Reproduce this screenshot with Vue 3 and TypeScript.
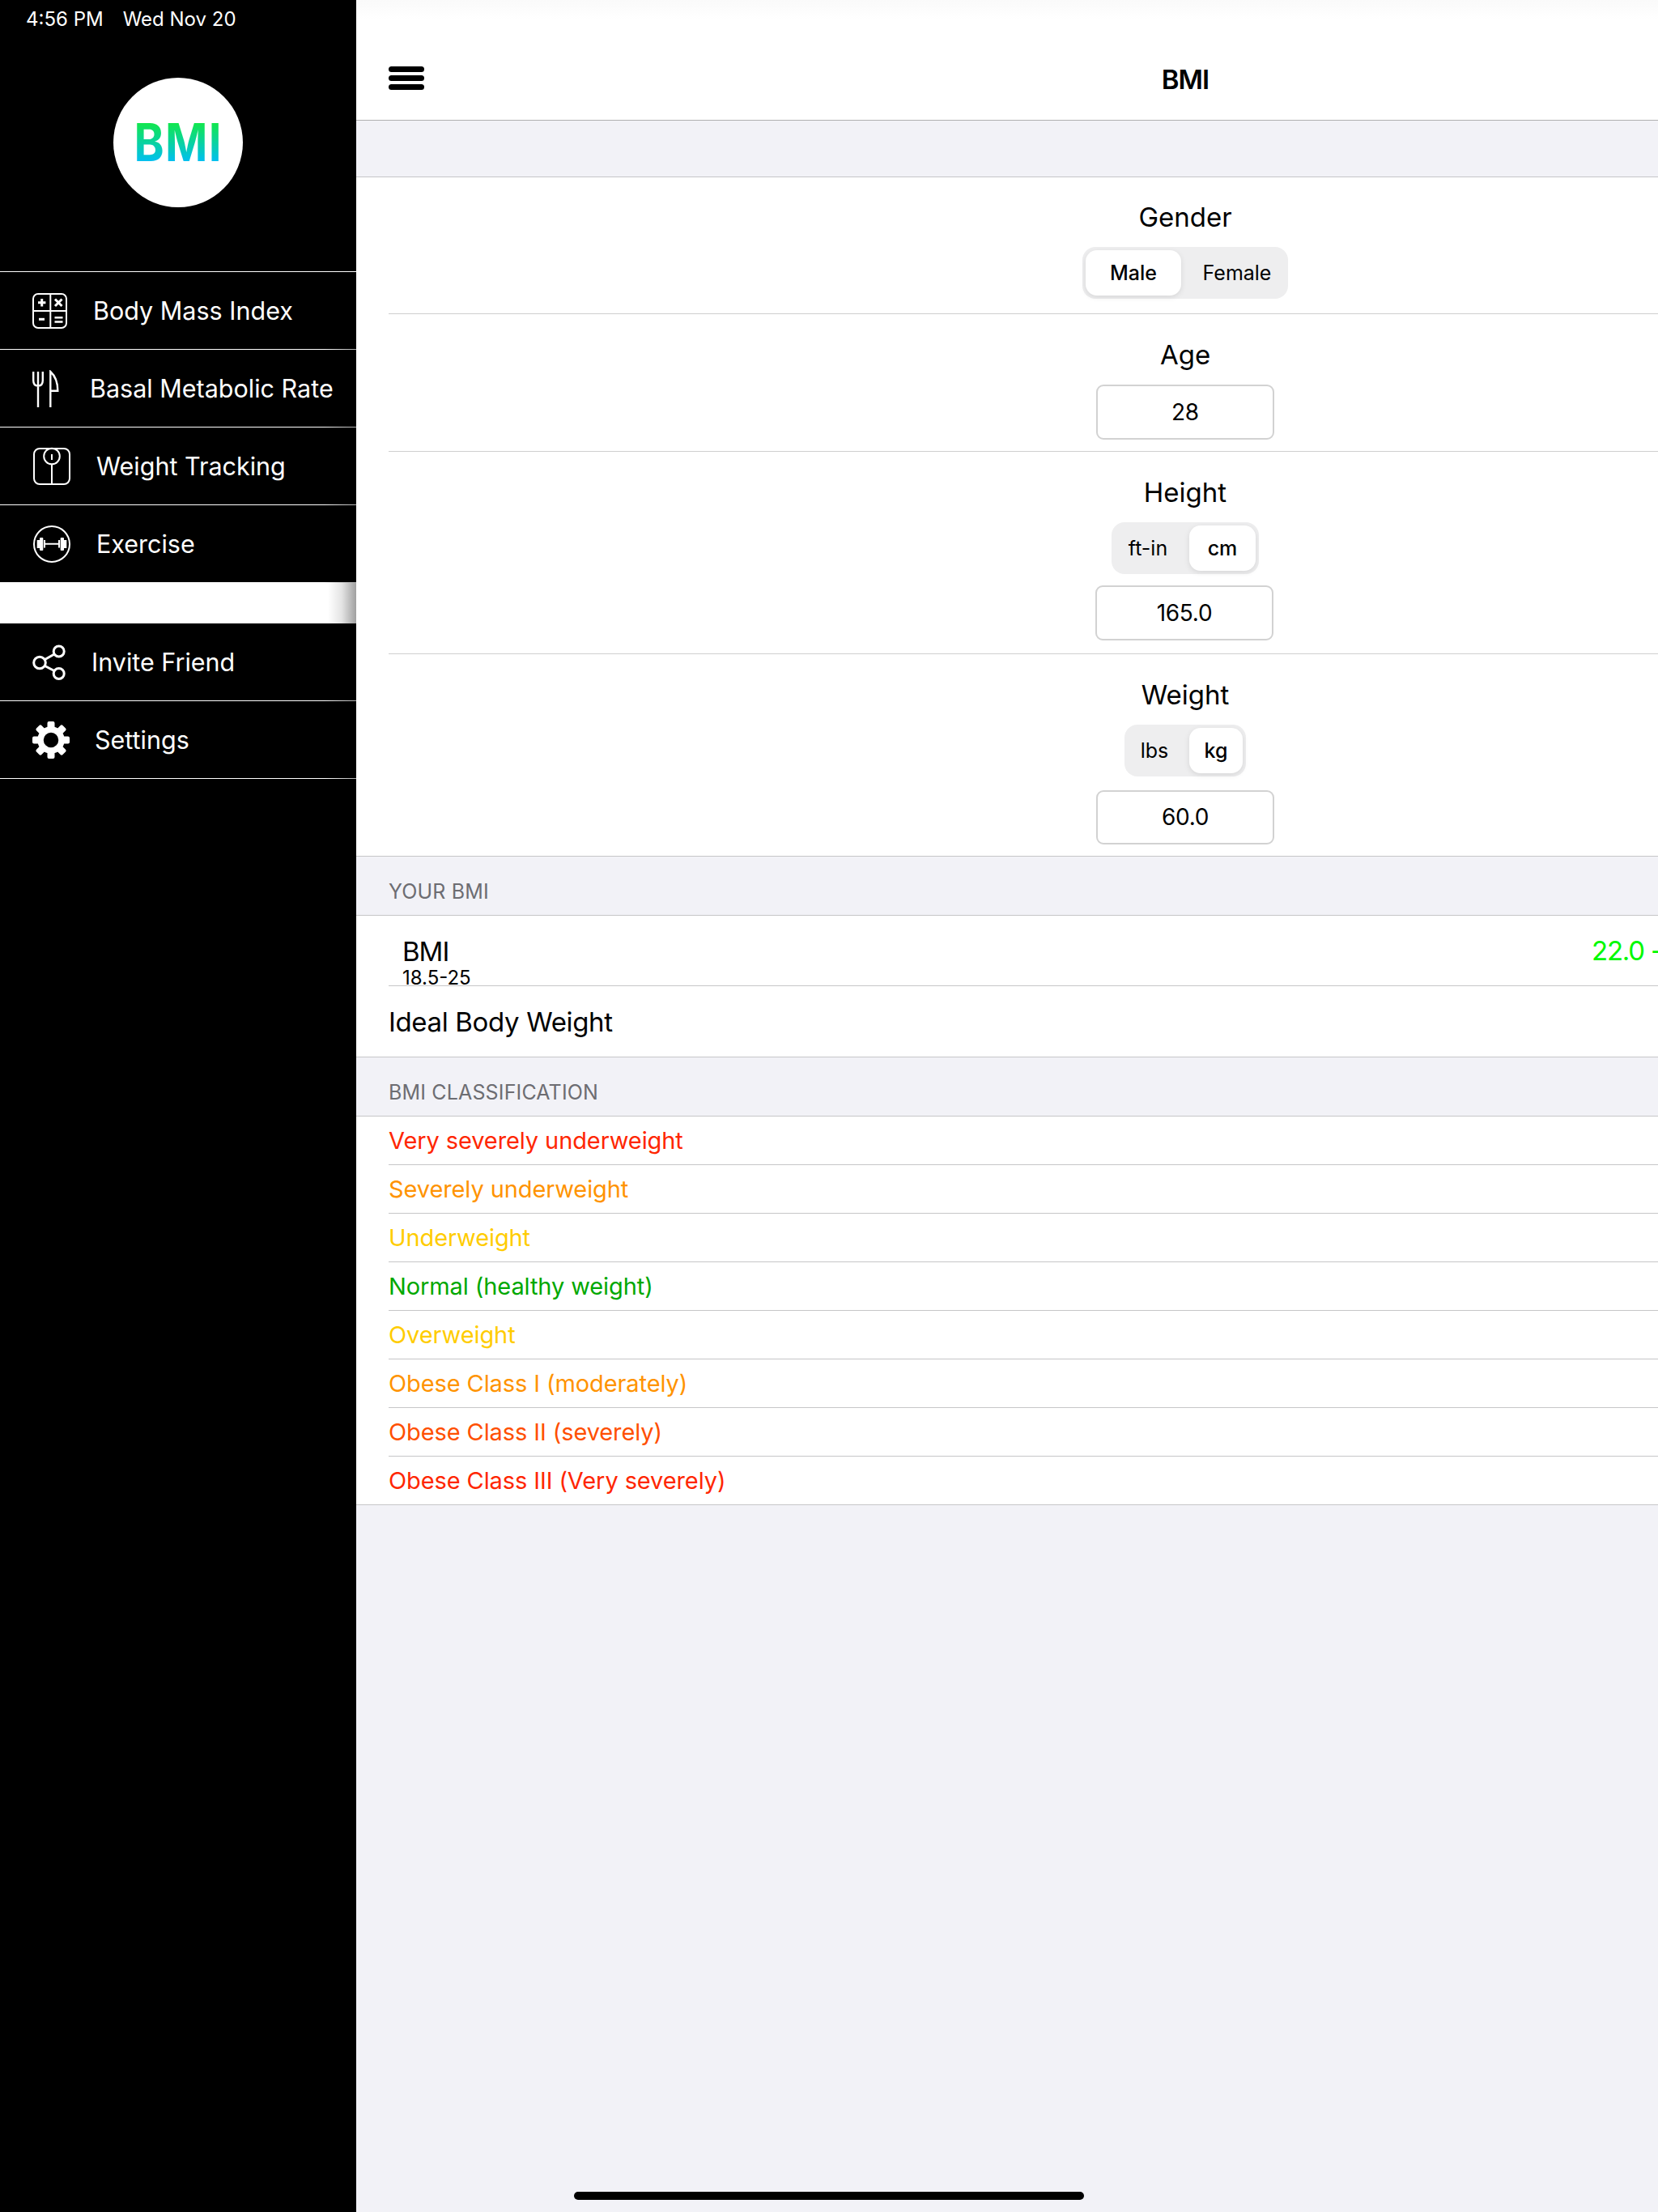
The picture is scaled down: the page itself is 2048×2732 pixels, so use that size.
<script setup lang="ts">
const menuTop = [
  { label: 'Body Mass Index', icon: 'calc', cls: 'l-bmi' },
  { label: 'Basal Metabolic Rate', icon: 'fork', cls: 'l-bmr' },
  { label: 'Weight Tracking', icon: 'scale', cls: 'l-wt' },
  { label: 'Exercise', icon: 'dumbbell', cls: 'l-ex' },
]
const menuBottom = [
  { label: 'Invite Friend', icon: 'share', cls: 'l-inv' },
  { label: 'Settings', icon: 'gear', cls: 'l-set' },
]
const classes = [
  { t: 'Very severely underweight', c: '#ff2600' },
  { t: 'Severely underweight', c: '#ff9300' },
  { t: 'Underweight', c: '#ffcc00' },
  { t: 'Normal (healthy weight)', c: '#00a800' },
  { t: 'Overweight', c: '#ffcc00' },
  { t: 'Obese Class I (moderately)', c: '#ff9300' },
  { t: 'Obese Class II (severely)', c: '#ff4f00' },
  { t: 'Obese Class III (Very severely)', c: '#ff2600' },
]
const gearTeeth = [0, 45, 90, 135, 180, 225, 270, 315]
</script>

<template>
  <div class="screen">
    <aside class="side">
      <div class="status">
        <span>4:56 PM</span><span>Wed Nov 20</span>
      </div>
      <div class="logo-wrap">
        <div class="logo"><span class="logo-text">BMI</span></div>
      </div>
      <nav class="menu">
        <div v-for="m in menuTop" :key="m.label" class="item">
          <div class="ico">
            <svg v-if="m.icon === 'calc'" width="46" height="46" viewBox="0 0 46 46" fill="none" stroke="#fff" stroke-width="2">
              <rect x="1" y="2" width="41" height="42" rx="6" />
              <path d="M22.300 2V44M1 23H42" />
              <path d="M7 12.700H16.400M11.700 8V17.400" stroke-width="3" />
              <path d="M28 8.500L36.500 17M36.500 8.500L28 17" stroke-width="3" />
              <path d="M8 33.300H15" stroke-width="3" />
              <path d="M27.500 31.300H37.500M27.500 36.500H37.500" stroke-width="2.500" />
            </svg>
            <svg v-else-if="m.icon === 'fork'" width="46" height="46" viewBox="0 0 46 46" fill="none" stroke="#fff" stroke-width="2.400">
              <path d="M1.200 2V13Q1.200 19.500 7 19.500Q12.800 19.500 12.800 13V2M7 2V46" />
              <path d="M22.300 46V2Q31.300 10 31.300 25.700H22.300" />
            </svg>
            <svg v-else-if="m.icon === 'scale'" width="48" height="48" viewBox="0 0 48 48" fill="none" stroke="#fff" stroke-width="2">
              <rect x="2" y="2" width="44" height="44" rx="7" />
              <circle cx="24" cy="11.500" r="9.800" />
              <path d="M24 21.300V46" />
              <path d="M24 9V16" stroke-width="2" />
            </svg>
            <svg v-else-if="m.icon === 'dumbbell'" width="48" height="48" viewBox="0 0 48 48" fill="none" stroke="#fff" stroke-width="2">
              <circle cx="24" cy="24" r="22" />
              <path d="M15 23.800H33M15 19V28.500M33 19V28.500" />
              <rect x="5.700" y="19" width="3.300" height="10" fill="#fff" stroke="none" />
              <rect x="9" y="16" width="4.300" height="16" rx="1" fill="#fff" stroke="none" />
              <rect x="34.700" y="16" width="4.300" height="16" rx="1" fill="#fff" stroke="none" />
              <rect x="39" y="19" width="3.300" height="10" fill="#fff" stroke="none" />
            </svg>
          </div>
          <span class="label" :class="m.cls">{{ m.label }}</span>
        </div>
      </nav>
      <div class="gap"></div>
      <nav class="menu2">
        <div v-for="m in menuBottom" :key="m.label" class="item">
          <div class="ico">
            <svg v-if="m.icon === 'share'" width="46" height="46" viewBox="0 0 46 46" fill="none" stroke="#fff" stroke-width="3">
              <circle cx="9" cy="23.500" r="7.300" />
              <circle cx="32.700" cy="9.500" r="6.500" />
              <circle cx="32.700" cy="37" r="6.500" />
              <path d="M15.500 19.500L27 13M15.500 27.500L27 33.500" />
            </svg>
            <svg v-else width="46" height="46" viewBox="0 0 46 46">
              <g fill="#fff">
                <rect v-for="a in gearTeeth" :key="a" x="18.500" y="0" width="9" height="10" rx="2" :transform="`rotate(${a} 23 23)`" />
              </g>
              <circle cx="23" cy="23" r="13" fill="none" stroke="#fff" stroke-width="7.500" />
            </svg>
          </div>
          <span class="label" :class="m.cls">{{ m.label }}</span>
        </div>
      </nav>
    </aside>

    <main class="main">
      <header class="nav">
        <div class="burger"><i></i><i></i><i></i></div>
        <h1 class="title">BMI</h1>
      </header>
      <div class="top-gap"></div>

      <section class="form">
        <div class="field f-gender">
          <div class="flabel">Gender</div>
          <div class="seg">
            <span class="opt on o-male">Male</span>
            <span class="opt o-female">Female</span>
          </div>
        </div>
        <div class="field f-age">
          <div class="flabel">Age</div>
          <div class="input">28</div>
        </div>
        <div class="field f-height">
          <div class="flabel">Height</div>
          <div class="seg">
            <span class="opt o-ftin">ft-in</span>
            <span class="opt on o-cm">cm</span>
          </div>
          <div class="input i-height">165.0</div>
        </div>
        <div class="field f-weight">
          <div class="flabel">Weight</div>
          <div class="seg">
            <span class="opt o-lbs">lbs</span>
            <span class="opt on o-kg">kg</span>
          </div>
          <div class="input i-weight">60.0</div>
        </div>
      </section>

      <div class="sect-head">YOUR BMI</div>
      <section class="card">
        <div class="bmi-row">
          <div class="bmi-left">
            <div class="bmi-name">BMI</div>
            <div class="bmi-range">18.5-25</div>
          </div>
          <div class="bmi-val">22.0 - Normal</div>
        </div>
        <div class="ideal">Ideal Body Weight</div>
      </section>

      <div class="sect-head">BMI CLASSIFICATION</div>
      <section class="card">
        <div v-for="c in classes" :key="c.t" class="cls" :style="{ color: c.c }">{{ c.t }}</div>
      </section>
    </main>
    <div class="home"></div>
  </div>
</template>

<style>
html, body { margin: 0; background: #f2f2f7; }
</style>

<style scoped>
.screen {
  width: 2048px;
  height: 2732px;
  display: flex;
  overflow: hidden;
  position: relative;
  background: #f2f2f7;
  font-family: Inter, "Liberation Sans", sans-serif;
  color: #000;
}
.side {
  width: 440px;
  flex: none;
  background: #000;
  color: #fff;
  display: flex;
  flex-direction: column;
}
.status {
  height: 48px;
  box-sizing: border-box;
  padding: 11px 0 0 32px;
  font-size: 24px;
  line-height: 26px;
  display: flex;
  gap: 24px;
}
.logo-wrap {
  height: 287px;
  box-sizing: border-box;
  padding-top: 48px;
  display: flex;
  justify-content: center;
}
.logo {
  width: 160px;
  height: 160px;
  border-radius: 50%;
  background: #fff;
  display: flex;
  align-items: center;
  justify-content: center;
}
.logo-text {
  font-size: 64px;
  font-weight: 700;
  line-height: 64px;
  letter-spacing: 1.500px;
  background: linear-gradient(180deg, #12e650 14%, #00bff0 86%);
  -webkit-background-clip: text;
  background-clip: text;
  color: transparent;
  transform: scaleX(0.88);
}
.menu { border-top: 1px solid #fff; }
.item {
  height: 95px;
  border-style: solid;
  border-width: 0 0 1px;
  border-image: linear-gradient(90deg, #fff 400px, #aaa 440px) 1;
  display: flex;
  align-items: center;
}
.ico { width: 40px; margin-left: 40px; height: 46px; flex: none; display: flex; align-items: center; }
.ico svg { flex: none; }
.label { font-size: 30.500px; line-height: 40px; white-space: nowrap; }
.l-bmi { margin-left: 35px; }
.l-bmr { margin-left: 31px; }
.l-wt { margin-left: 39px; }
.l-ex { margin-left: 39px; }
.l-inv { margin-left: 33px; }
.l-set { margin-left: 37px; }
.gap {
  height: 50px;
  background: linear-gradient(90deg, #fff 405px, #e4e4e4 422px, #a0a0a0 440px);
}
.main { width: 2048px; flex: none; position: relative; }
.nav {
  height: 148px;
  background: linear-gradient(180deg, #fafafa 0, #fff 24px);
  border-bottom: 1px solid #b0b0b0;
  position: relative;
  display: flex;
  align-items: center;
  justify-content: center;
}
.burger {
  position: absolute;
  left: 40px;
  top: 82px;
  display: flex;
  flex-direction: column;
  gap: 4px;
}
.burger i {
  display: block;
  width: 44px;
  height: 7px;
  background: #000;
  border-radius: 4px;
}
.title { margin: 0; padding-top: 48px; font-size: 33px; font-weight: 600; line-height: 50px; letter-spacing: -1px; }
.top-gap { height: 69px; border-bottom: 1px solid #c6c6c8; }
.form { background: #fff; }
.field {
  display: flex;
  flex-direction: column;
  align-items: center;
  box-sizing: border-box;
  margin-left: 40px;
  padding-right: 40px;
  padding-top: 30px;
  border-bottom: 1px solid #cfcfcf;
}
.field:last-child { border-bottom: none; }
.f-gender { height: 169px; padding-top: 29px; }
.f-age { height: 170px; }
.f-height { height: 250px; }
.f-weight { height: 249px; }
.flabel { font-size: 33px; line-height: 40px; height: 40px; }
.seg {
  margin-top: 17px;
  height: 64px;
  box-sizing: border-box;
  padding: 4px;
  border-radius: 16px;
  background: #eeeeef;
  display: flex;
}
.opt {
  font-size: 25px;
  height: 56px;
  line-height: 56px;
  text-align: center;
  box-sizing: border-box;
}
.opt.on {
  background: #fff;
  border-radius: 14px;
  font-weight: 500;
  box-shadow: 0 2px 7px rgba(0, 0, 0, 0.1);
}
.o-male { width: 118px; }
.o-female { width: 128px; padding-left: 10px; }
.o-ftin { width: 92px; padding-right: 10px; }
.o-cm { width: 82px; }
.o-lbs { width: 76px; padding-right: 10px; }
.o-kg { width: 66px; }
.input {
  width: 220px;
  height: 68px;
  box-sizing: border-box;
  border: 2px solid #d2d2d2;
  border-radius: 9px;
  font-size: 28px;
  letter-spacing: -0.3px;
  line-height: 64px;
  text-align: center;
  margin-top: 17px;
}
.i-height { margin-top: 14px; margin-right: 2px; }
.i-weight { height: 67px; line-height: 62px; }
.sect-head {
  height: 74px;
  box-sizing: border-box;
  padding: 28px 0 0 40px;
  font-size: 25px;
  line-height: 30px;
  letter-spacing: 0.15px;
  color: #6d6d72;
  border-top: 1px solid #c6c6c8;
  border-bottom: 1px solid #c6c6c8;
}
.card { background: #fff; }
.bmi-row {
  height: 86px;
  margin-left: 40px;
  border-bottom: 1px solid #c6c6c8;
  overflow: hidden;
  display: flex;
  white-space: nowrap;
}
.bmi-left { width: 1486px; flex: none; box-sizing: border-box; padding: 24px 0 0 17px; }
.bmi-name { font-size: 33px; line-height: 40px; letter-spacing: -1px; }
.bmi-range { font-size: 24px; line-height: 20px; margin-top: 3px; height: 22px; }
.bmi-val {
  margin-top: 21px;
  color: #00f900;
  font-size: 33px;
  letter-spacing: -1.200px;
  line-height: 44px;
}
.ideal { height: 87px; padding-left: 40px; font-size: 33px; line-height: 88px; letter-spacing: -0.35px; }
.cls {
  height: 59px;
  margin-left: 40px;
  font-size: 29px;
  line-height: 59px;
  letter-spacing: -0.1px;
  border-bottom: 1px solid #c6c6c8;
}
.cls:last-child { margin-left: 0; padding-left: 40px; }
.home {
  position: absolute;
  left: 709px;
  top: 2707px;
  width: 630px;
  height: 10px;
  border-radius: 5px;
  background: #000;
}
</style>
